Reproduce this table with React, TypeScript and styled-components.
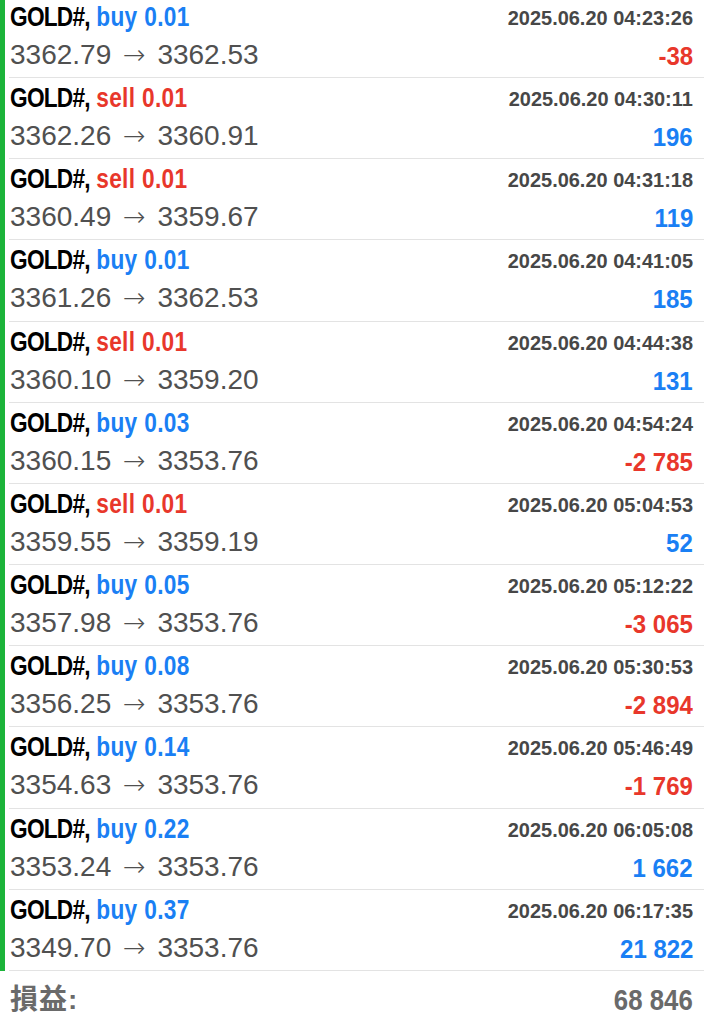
import React from "react";
import styled, { createGlobalStyle } from "styled-components";

const GlobalStyle = createGlobalStyle`
  html, body {
    margin: 0;
    padding: 0;
    background: #ffffff;
    overflow: hidden;
  }
  body {
    font-family: "Liberation Sans", Arial, sans-serif;
  }
`;

const BLUE = "#1a7ff4";
const RED = "#e8372b";

const Page = styled.div`
  width: 704px;
  height: 1024px;
  overflow: hidden;
  background: #fff;
`;

const List = styled.div`
  margin-top: -3.2px;
  border-left: 5px solid #1cb43a;
`;

const Row = styled.div`
  box-sizing: border-box;
  height: 81.18px;
  margin-left: 4px;
  padding: 4px 11px 0 1px;
  border-bottom: 1px solid #e3e3e3;
  display: flex;
  flex-direction: column;
  gap: 1px;
`;

const Line = styled.div`
  display: flex;
  justify-content: space-between;
  align-items: flex-start;
  height: 34px;
`;

const Title = styled.span`
  display: inline-block;
  font-family: "Liberation Sans", Arial, sans-serif;
  font-weight: 700;
  font-size: 27px;
  line-height: 32px;
  color: #000;
  white-space: nowrap;
  transform: scaleX(0.84);
  transform-origin: left center;
`;

const Symbol = styled.span`
  letter-spacing: -0.9px;
`;

const Side = styled.span<{ $sell: boolean }>`
  letter-spacing: 0.4px;
  color: ${(p) => (p.$sell ? RED : BLUE)};
`;

const DateText = styled.span`
  display: inline-block;
  font-family: "Liberation Sans", Arial, sans-serif;
  font-weight: 700;
  font-size: 21px;
  line-height: 24px;
  padding-top: 5px;
  color: #474747;
  white-space: nowrap;
  transform: scaleX(0.95);
  transform-origin: right center;
`;

const Prices = styled.span`
  font-family: "Liberation Sans", Arial, sans-serif;
  font-weight: 400;
  font-size: 28px;
  line-height: 34px;
  padding-top: 2px;
  color: #505050;
  white-space: nowrap;
`;

const Arrow = styled.span`
  font-family: "DejaVu Sans", sans-serif;
  font-weight: 200;
  font-size: 27px;
  margin: 0 4px;
`;

const Profit = styled.span<{ $neg: boolean }>`
  display: inline-block;
  font-family: "Liberation Sans", Arial, sans-serif;
  font-weight: 700;
  font-size: 25px;
  line-height: 34px;
  padding-top: 3px;
  color: ${(p) => (p.$neg ? RED : BLUE)};
  white-space: nowrap;
  transform: scaleX(0.96);
  transform-origin: right center;
`;

const Footer = styled.div`
  display: flex;
  justify-content: space-between;
  align-items: flex-start;
  padding: 12px 11px 0 10px;
`;

const FooterLabel = styled.span`
  font-family: "Liberation Sans", "Noto Sans CJK JP", sans-serif;
  font-weight: 700;
  font-size: 28px;
  line-height: 34px;
  letter-spacing: 1px;
  color: #6a6a6a;
`;

const FooterValue = styled.span`
  display: inline-block;
  font-family: "Liberation Sans", Arial, sans-serif;
  font-weight: 700;
  font-size: 30px;
  line-height: 34px;
  color: #6a6a6a;
  transform: scaleX(0.86);
  transform-origin: right center;
`;

type Deal = {
  side: "buy" | "sell";
  lot: string;
  open: string;
  close: string;
  time: string;
  profit: string;
};

const deals: Deal[] = [
  { side: "buy", lot: "0.01", open: "3362.79", close: "3362.53", time: "04:23:26", profit: "-38" },
  { side: "sell", lot: "0.01", open: "3362.26", close: "3360.91", time: "04:30:11", profit: "196" },
  { side: "sell", lot: "0.01", open: "3360.49", close: "3359.67", time: "04:31:18", profit: "119" },
  { side: "buy", lot: "0.01", open: "3361.26", close: "3362.53", time: "04:41:05", profit: "185" },
  { side: "sell", lot: "0.01", open: "3360.10", close: "3359.20", time: "04:44:38", profit: "131" },
  { side: "buy", lot: "0.03", open: "3360.15", close: "3353.76", time: "04:54:24", profit: "-2 785" },
  { side: "sell", lot: "0.01", open: "3359.55", close: "3359.19", time: "05:04:53", profit: "52" },
  { side: "buy", lot: "0.05", open: "3357.98", close: "3353.76", time: "05:12:22", profit: "-3 065" },
  { side: "buy", lot: "0.08", open: "3356.25", close: "3353.76", time: "05:30:53", profit: "-2 894" },
  { side: "buy", lot: "0.14", open: "3354.63", close: "3353.76", time: "05:46:49", profit: "-1 769" },
  { side: "buy", lot: "0.22", open: "3353.24", close: "3353.76", time: "06:05:08", profit: "1 662" },
  { side: "buy", lot: "0.37", open: "3349.70", close: "3353.76", time: "06:17:35", profit: "21 822" },
];

export default function App() {
  return (
    <Page>
      <GlobalStyle />
      <List>
        {deals.map((d, i) => (
          <Row key={i}>
            <Line>
              <Title>
                <Symbol>GOLD#,</Symbol>{" "}
                <Side $sell={d.side === "sell"}>
                  {d.side} {d.lot}
                </Side>
              </Title>
              <DateText>2025.06.20 {d.time}</DateText>
            </Line>
            <Line>
              <Prices>
                {d.open} <Arrow>→</Arrow> {d.close}
              </Prices>
              <Profit $neg={d.profit.startsWith("-")}>{d.profit}</Profit>
            </Line>
          </Row>
        ))}
      </List>
      <Footer>
        <FooterLabel>損益:</FooterLabel>
        <FooterValue>68 846</FooterValue>
      </Footer>
    </Page>
  );
}
